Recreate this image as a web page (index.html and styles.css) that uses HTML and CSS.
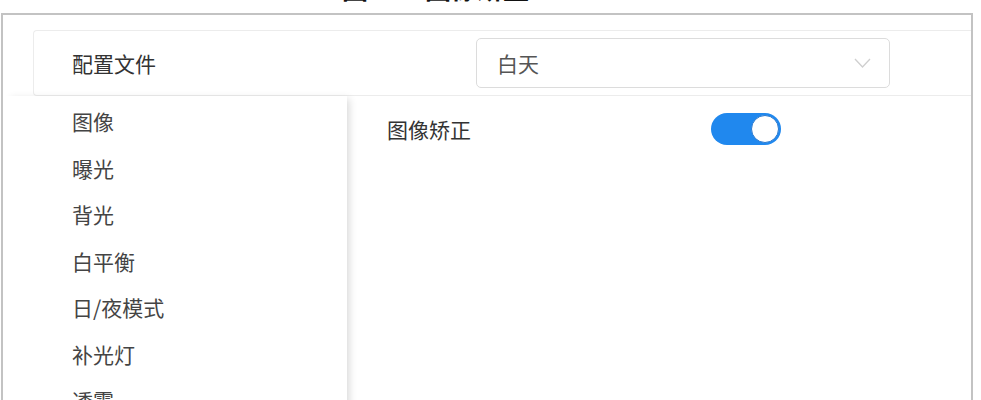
FILE: index.html
```html
<!DOCTYPE html>
<html lang="zh">
<head>
<meta charset="utf-8">
<link rel="stylesheet" href="styles.css">
</head>
<body>
<div class="caption"><span class="cap-num">图 5-6</span><span>图像矫正</span></div>
<div class="frame">
  <div class="profile">
    <div class="profile-label">配置文件</div>
    <div class="select">
      <span class="select-value">白天</span>
      <svg class="chevron" width="17" height="10" viewBox="0 0 17 10"><path d="M1 1 L8.5 9 L16 1" fill="none" stroke="#cfcfcf" stroke-width="1.3"/></svg>
    </div>
  </div>
  <div class="main">
    <ul class="menu">
      <li>图像</li>
      <li>曝光</li>
      <li>背光</li>
      <li>白平衡</li>
      <li>日/夜模式</li>
      <li>补光灯</li>
      <li>透雾</li>
    </ul>
    <div class="content">
      <div class="row">
        <span class="row-label">图像矫正</span>
        <span class="toggle"><span class="knob"></span></span>
      </div>
    </div>
  </div>
</div>
</body>
</html>
```
FILE: styles.css
```css
html, body {
  margin: 0;
  padding: 0;
  background: #ffffff;
  overflow: hidden;
}
body {
  font-family: "Noto Sans CJK SC", "Noto Sans", sans-serif;
  color: #3a3a3a;
  width: 981px;
  height: 400px;
}
.caption {
  height: 26px;
  line-height: 26px;
  margin-top: -25px;
  margin-bottom: 12px;
  padding-left: 342px;
  font-size: 26px;
  font-weight: 700;
  color: #111;
  white-space: nowrap;
  display: flex;
}
.cap-num {
  width: 83px;
}
.frame {
  margin-left: 1px;
  width: 968px;
  height: 400px;
  border: 2px solid #c3c3c3;
  border-bottom: none;
  padding-top: 15px;
  box-sizing: content-box;
}
.profile {
  margin-left: 30px;
  height: 64px;
  border: 1px solid #ececec;
  border-right: none;
  border-radius: 4px 0 0 4px;
  display: grid;
  grid-template-columns: 442px 414px;
  align-items: center;
}
.profile-label {
  padding-left: 38px;
  font-size: 21px;
  color: #333;
}
.select {
  height: 48px;
  border: 1px solid #dcdcdc;
  border-radius: 5px;
  display: flex;
  align-items: center;
  justify-content: space-between;
  padding: 0 18px 0 20px;
}
.select-value {
  font-size: 21px;
  color: #555;
}
.chevron {
  display: block;
}
.main {
  display: flex;
  height: 320px;
}
.menu {
  list-style: none;
  margin: 0;
  padding: 2px 0 0 69px;
  width: 275px;
  box-shadow: 5px 0 8px -3px rgba(0, 0, 0, 0.16);
  position: relative;
  z-index: 1;
  background: #fff;
}
.menu li {
  height: 46.5px;
  line-height: 46px;
  font-size: 21px;
  color: #444;
}
.content {
  padding: 17px 0 0 40px;
  flex: 1;
}
.row {
  display: flex;
  align-items: center;
  height: 32px;
}
.row-label {
  width: 324px;
  font-size: 21px;
  color: #333;
}
.toggle {
  width: 70px;
  height: 32px;
  border-radius: 16px;
  background: #2088ee;
  display: flex;
  align-items: center;
  justify-content: flex-end;
  padding-right: 2px;
  box-sizing: border-box;
}
.knob {
  width: 28px;
  height: 28px;
  border-radius: 50%;
  background: #fff;
  border: 1px solid #2a79cf;
  box-sizing: border-box;
}
```
